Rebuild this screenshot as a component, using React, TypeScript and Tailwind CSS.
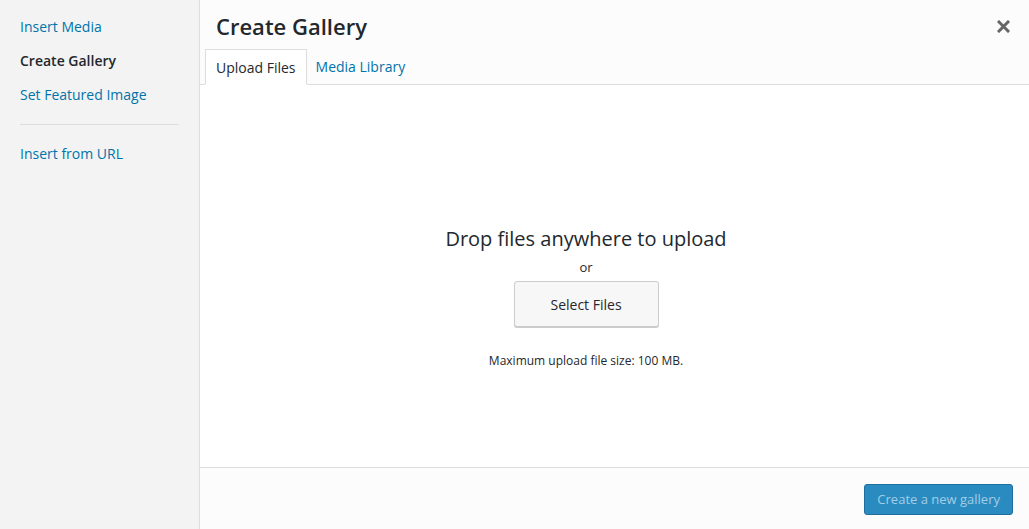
import React from 'react';

export default function App() {
  const font = { fontFamily: '"Open Sans", "Noto Sans", sans-serif' };

  return (
    <div className="flex w-[1029px] h-[529px] bg-white text-[#444] overflow-hidden" style={font}>
      {/* Sidebar menu */}
      <div className="w-[200px] shrink-0 bg-[#f3f3f3] border-r border-[#ddd] pt-[16px]">
        <div className="flex flex-col text-[14px]">
          <a className="px-[20px] h-[34px] leading-[20px] py-[1px] text-[#0073aa]">Insert Media</a>
          <a className="px-[20px] h-[34px] leading-[20px] py-[1px] text-[#23282d] font-semibold">Create Gallery</a>
          <a className="px-[20px] h-[34px] leading-[20px] py-[1px] text-[#0073aa]">Set Featured Image</a>
        </div>
        <div className="mx-[20px] mt-[6px] mb-[19px] h-px bg-[#ddd] w-[159px]"></div>
        <a className="block px-[20px] text-[14px] leading-[20px] text-[#0073aa]">Insert from URL</a>
      </div>

      {/* Main frame */}
      <div className="flex-1 flex flex-col">
        {/* Title bar */}
        <div className="h-[49px] bg-[#fcfcfc] flex items-center justify-between pl-[16px] pr-[19px]">
          <h1 className="text-[22px] font-semibold text-[#23282d] leading-[30px] mt-[2px]">Create Gallery</h1>
          <svg width="13" height="13" viewBox="0 0 13 13" className="mt-[3px]">
            <path d="M2 2 L11 11 M11 2 L2 11" stroke="#666" strokeWidth="3" strokeLinecap="square" />
          </svg>
        </div>

        {/* Tabs */}
        <div className="h-[36px] bg-[#fcfcfc] border-b border-[#ddd] flex items-end pl-[5px] text-[14px]">
          <div className="h-[36px] mb-[-1px] px-[10px] bg-white border border-[#ddd] border-b-white flex items-center text-[#23282d]">
            Upload Files
          </div>
          <div className="h-[35px] pl-[9px] pr-[10px] flex items-center text-[#0073aa]">Media Library</div>
        </div>

        {/* Upload area */}
        <div className="flex-1 bg-white flex flex-col items-center pt-[140px] pr-[57px]">
          <p className="text-[20px] leading-[28px] text-[#23282d]">Drop files anywhere to upload</p>
          <p className="text-[13px] leading-[18px] text-[#23282d] mt-[5px]">or</p>
          <button className="mt-[5px] w-[145px] h-[46px] rounded-[3px] border border-[#ccc] bg-[#f7f7f7] text-[14px] text-[#23282d] shadow-[0_1px_0_#ccc]">
            Select Files
          </button>
          <p className="mt-[25px] text-[12px] leading-[18px] text-[#23282d]">Maximum upload file size: 100 MB.</p>
        </div>

        {/* Footer toolbar */}
        <div className="h-[62px] shrink-0 border-t border-[#ddd] bg-[#fcfcfc] flex items-start justify-end pr-[16px] pt-[16px]">
          <button className="h-[31px] px-[12px] rounded-[3px] bg-[#2a8bc0] border border-[#1f6e9e] text-[13px] text-[#a3cde6]">
            Create a new gallery
          </button>
        </div>
      </div>
    </div>
  );
}
